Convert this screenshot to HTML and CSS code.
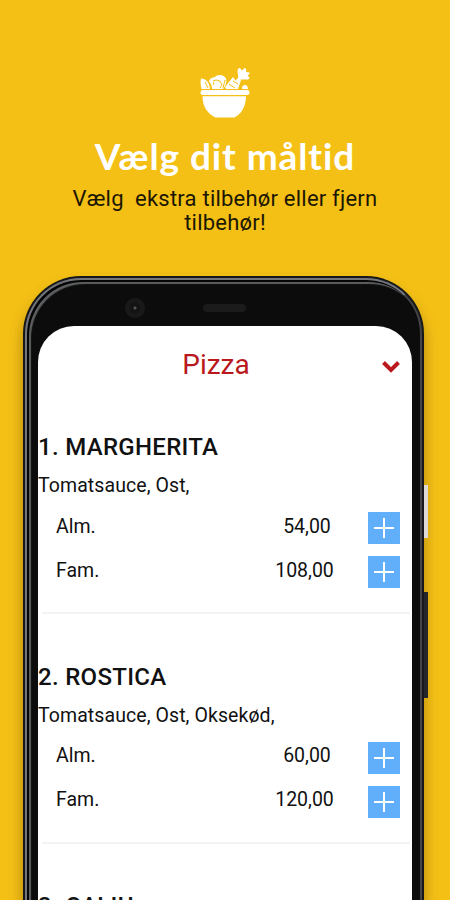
FILE: index.html
```
<!DOCTYPE html>
<html lang="da">
<head>
  <meta charset="UTF-8">
  <meta name="viewport" content="width=device-width, initial-scale=1.0">
  <link rel="stylesheet" href="styles.css">
  <title>Vælg dit måltid</title>
</head>
<body>
  <header class="intro">
    <svg class="bowl" viewBox="0 0 52 52" width="52" height="52" fill="#fff">
      <rect x="1.500" y="23" width="49" height="5" rx="2.500"/>
      <path d="M3.500 29.200h43.500c0 10.500-5 18-11.500 21.300H16.500C9 47 3.500 40 3.500 29.200z"/>
      <path d="M2 11.500c5 .5 8 3 9 10.500H2.500C1.500 18 1.300 14 2 11.500z"/>
      <path d="M10 14.500c1-4 4-4 5-4 4-4 10-3 12 1 1 3 0 7-3 10.500H13c0-3-1-5-3-7.500z"/>
      <path d="M26 20l8-10 2.500 3.500L40 10l2 3-3 9H27zM43 22c0-3 1-4 3-4s3 2 3 4z"/>
      <path d="M39.500 12.500L38.500 4c0-2 1-3 2.500-3l2 2.500L45.500 1c1.500 0 2 1.500 1.500 4l3.500.5c1 1-1 2-2 3l2 2c0 1.500-1 2-2.500 2z"/>
      <path class="bowl-line" d="M14 14l3-1 4 1 2 4-2 3M15 15l-1 3M6 15l3 6M30 17l6 4M34 14l5 3M26 13l-2 8"/>
    </svg>
    <h1>Vælg dit måltid</h1>
    <p>Vælg&nbsp; ekstra tilbehør eller fjern<br>tilbehør!</p>
  </header>

  <div class="phone">
    <span class="side-button power"></span>
    <span class="side-button volume"></span>
    <div class="bezel">
      <div class="sensors">
        <span class="camera"></span>
        <span class="speaker"></span>
      </div>
      <main class="screen">
        <div class="category">
          <h2>Pizza</h2>
          <svg class="chevron" viewBox="0 0 20 14" width="20" height="14">
            <path d="M2.500 2.500L10 10l7.500-7.500"/>
          </svg>
        </div>

        <section class="dish">
          <h3>1. MARGHERITA</h3>
          <p>Tomatsauce, Ost,</p>
          <div class="size"><span>Alm.</span><span class="price">54,00</span><button class="add" aria-label="Tilføj"></button></div>
          <div class="size"><span>Fam.</span><span class="price">108,00</span><button class="add" aria-label="Tilføj"></button></div>
        </section>

        <section class="dish">
          <h3>2. ROSTICA</h3>
          <p>Tomatsauce, Ost, Oksekød,</p>
          <div class="size"><span>Alm.</span><span class="price">60,00</span><button class="add" aria-label="Tilføj"></button></div>
          <div class="size"><span>Fam.</span><span class="price">120,00</span><button class="add" aria-label="Tilføj"></button></div>
        </section>

        <section class="dish">
          <h3>3. CALIU</h3>
        </section>
      </main>
    </div>
  </div>
</body>
</html>
```

FILE: styles.css
```
* {
  box-sizing: border-box;
}

body {
  margin: 0;
  height: 900px;
  overflow: hidden;
  display: flex;
  flex-direction: column;
  background-color: #f4c016;
  font-family: Roboto, sans-serif;
  color: #111;
}

h1, h2, h3, p {
  margin: 0;
}

.intro {
  height: 276px;
  padding-top: 67px;
  flex: none;
  text-align: center;
}

.bowl {
  display: block;
  margin: 0 auto;
}

.bowl-line {
  fill: none;
  stroke: #f4c016;
  stroke-width: 1;
}

.intro h1 {
  margin-top: 16px;
  font-family: Lato, sans-serif;
  font-size: 37px;
  line-height: 42px;
  font-weight: 700;
  letter-spacing: 0.900px;
  color: #fff;
}

.intro p {
  margin-top: 10px;
  font-size: 22px;
  line-height: 24px;
  letter-spacing: 0.220px;
  color: #1c1704;
}

.phone {
  position: relative;
  flex: none;
  width: 401px;
  height: 624px;
  margin-left: 23px;
  padding: 2px 2px 0;
  border-radius: 58px 58px 0 0;
  background-color: #15171a;
  box-shadow: 0 10px 14px rgba(90, 60, 0, 0.450);
}

.bezel {
  height: 100%;
  padding: 0 8px 0 11px;
  overflow: hidden;
  border: 2px solid #74767c;
  border-right-color: #444447;
  border-bottom: none;
  border-radius: 56px 56px 0 0;
  background-color: #0c0c0c;
  box-shadow: inset 2px 2px 0 #050505, inset 4px 4px 1px #5d5f60;
}

.side-button {
  position: absolute;
  left: 401px;
  width: 4px;
}

.power {
  top: 209px;
  height: 53px;
  background-color: #dedbd6;
}

.volume {
  top: 316px;
  height: 106px;
  background-color: #23262a;
}

.sensors {
  display: flex;
  align-items: center;
  height: 46px;
  padding: 10px 0 0 87px;
}

.camera {
  width: 20px;
  height: 20px;
  border-radius: 50%;
  background: radial-gradient(circle, #555 0 1px, #131313 2px 5px, #191919 6px);
}

.speaker {
  width: 43px;
  height: 8px;
  margin-left: 58px;
  border-radius: 4px;
  background-color: #1b1b1b;
}

.screen {
  border-radius: 36px 36px 0 0;
  background-color: #fff;
}

.category {
  display: flex;
  align-items: center;
  height: 76px;
  padding-right: 11px;
}

.category h2 {
  flex: 1;
  padding-left: 13px;
  font-size: 28px;
  font-weight: 400;
  text-align: center;
  color: #b9191c;
}

.chevron {
  margin-top: 5px;
  fill: none;
  stroke: #b9191c;
  stroke-width: 4;
}

.dish {
  height: 229.500px;
  padding-top: 30px;
}

.dish h3 {
  font-size: 24px;
  line-height: 30px;
  font-weight: 500;
  letter-spacing: 0.300px;
}

.dish p {
  margin: 11px 0 7px;
  font-size: 19.500px;
  line-height: 26px;
  letter-spacing: 0.080px;
}

.size {
  display: grid;
  grid-template-columns: 202px 110px 32px;
  align-items: center;
  height: 44px;
  padding-left: 18px;
  font-size: 19.500px;
  line-height: 30px;
}

.size span {
  margin-top: -3px;
}

.size:last-child {
  height: 64px;
  margin-right: 2px;
  margin-left: 4px;
  padding: 6px 0 24px 14px;
  border-bottom: 2px solid #f3f3f3;
}

/* prices hang slightly left of the column centre on the larger size */
.price {
  padding-right: 12px;
  text-align: center;
}

.size:last-child .price {
  padding-right: 17px;
}

.add {
  width: 32px;
  height: 32px;
  padding: 0;
  border: none;
  background:
    linear-gradient(#fff, #fff) center / 20px 2px no-repeat,
    linear-gradient(#fff, #fff) center / 2px 20px no-repeat,
    #61aefb;
}
```
